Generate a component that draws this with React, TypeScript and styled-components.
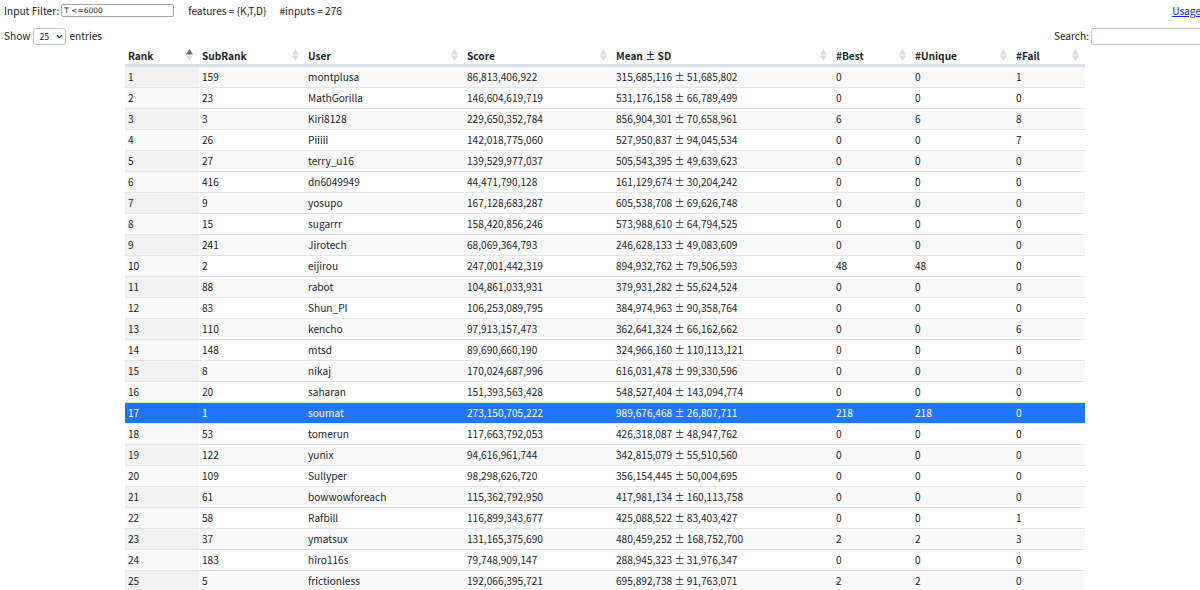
import React from "react";
import styled, { createGlobalStyle } from "styled-components";
import { ChevronDown } from "lucide-react";

const Global = createGlobalStyle`
  html, body { margin: 0; padding: 0; background: #fff; overflow: hidden; }
  body { font-family: "Noto Sans CJK JP", "Noto Sans", sans-serif; font-size: 10.15px; color: #212529; }
`;
const Page = styled.div`
  width: 1200px; height: 590px; overflow: hidden;
`;
const Inner = styled.div`
  width: 1201px; padding-left: 4px; box-sizing: border-box;
`;
const TopBar = styled.div`
  display: flex; align-items: center; height: 20px; white-space: nowrap;
`;
const FilterLabel = styled.label`
  margin-right: 2px;
`;
const FilterInput = styled.input`
  width: 108px; height: 11px; padding: 0 1px 0 2px; margin: 0; border: 1px solid #a5a5a5; border-radius: 2px;
  font-family: "DejaVu Sans", sans-serif; font-size: 7.5px; color: #212529; background: #fff; outline: none;
`;
const Feature = styled.span<{ $gap: number }>`
  margin-left: ${(p) => p.$gap}px;
`;
const UsageLink = styled.a`
  margin-left: auto; color: #0d25f0; text-decoration: underline;
`;
const ControlBar = styled.div`
  display: flex; align-items: center; justify-content: space-between; height: 18px; margin-top: 6px; margin-bottom: 2px;
`;
const LengthLabel = styled.div`
  display: flex; align-items: center; gap: 3px;
`;
const SelectWrap = styled.span`
  position: relative; display: inline-flex; margin-top: 2px;
`;
const LengthSelect = styled.select`
  appearance: none; width: 33px; height: 17px; padding: 0 0 0 5px; border: 1px solid #c4c4c4; border-radius: 3px; background: #fff;
  font-family: "Noto Sans CJK JP", sans-serif; font-size: 8.8px; color: #212529; margin: 0;
`;
const SelectChevron = styled(ChevronDown)`
  position: absolute; right: 2px; top: 4px; width: 9px; height: 9px; stroke-width: 3.5; color: #212529; pointer-events: none;
`;
const SearchLabel = styled.div`
  display: flex; align-items: center; gap: 2px;
`;
const SearchInput = styled.input`
  width: 111px; height: 15px; padding: 0; margin: 2px -3px 0 0; border: 1px solid #c4c4c4; border-radius: 3px; background: #fff; outline: none; box-sizing: content-box;
`;
const TableWrap = styled.div`
  margin: 1px 0 0 121px; width: 960px;
`;
const Table = styled.table`
  width: 960px; table-layout: fixed; border-collapse: collapse;
`;
const Th = styled.th`
  position: relative; height: 17px; padding: 1px 3px 0; text-align: left; font-weight: 700; font-size: 10.15px; line-height: 17px;
  border-bottom: 3px solid #dee2e6; color: #212529;
`;
const SortIcon = styled.svg`
  position: absolute; right: 6px; top: 3px; width: 7px; height: 12px;
`;
const Tr = styled.tr<{ $selected: boolean; $odd: boolean }>`
  height: 21px; background: ${(p) => (p.$selected ? "#2176ff" : p.$odd ? "#f9f9f9" : "#fff")};
  color: ${(p) => (p.$selected ? "#fff" : "#212529")};
`;
const Td = styled.td<{ $sorted?: boolean; $odd?: boolean; $selected?: boolean }>`
  padding: 0 3px; font-size: 10.15px; line-height: 20px; border-top: 1px solid #e3e6e9; white-space: nowrap; overflow: hidden;
  background: ${(p) => (p.$selected ? "#1f73f5" : p.$sorted ? (p.$odd ? "#f1f1f1" : "#fafafa") : "transparent")};
`;

const widths = [74, 106, 159, 149, 220, 79, 101, 72];
const headers = ["Rank", "SubRank", "User", "Score", "Mean ± SD", "#Best", "#Unique", "#Fail"];
const rows: (string | number)[][] = [
  [159, "montplusa", "86,813,406,922", "315,685,116 ± 51,685,802", 0, 0, 1],
  [23, "MathGorilla", "146,604,619,719", "531,176,158 ± 66,789,499", 0, 0, 0],
  [3, "Kiri8128", "229,650,352,784", "856,904,301 ± 70,658,961", 6, 6, 8],
  [26, "Piiiii", "142,018,775,060", "527,950,837 ± 94,045,534", 0, 0, 7],
  [27, "terry_u16", "139,529,977,037", "505,543,395 ± 49,639,623", 0, 0, 0],
  [416, "dn6049949", "44,471,790,128", "161,129,674 ± 30,204,242", 0, 0, 0],
  [9, "yosupo", "167,128,683,287", "605,538,708 ± 69,626,748", 0, 0, 0],
  [15, "sugarrr", "158,420,856,246", "573,988,610 ± 64,794,525", 0, 0, 0],
  [241, "Jirotech", "68,069,364,793", "246,628,133 ± 49,083,609", 0, 0, 0],
  [2, "eijirou", "247,001,442,319", "894,932,762 ± 79,506,593", 48, 48, 0],
  [88, "rabot", "104,861,033,931", "379,931,282 ± 55,624,524", 0, 0, 0],
  [83, "Shun_PI", "106,253,089,795", "384,974,963 ± 90,358,764", 0, 0, 0],
  [110, "kencho", "97,913,157,473", "362,641,324 ± 66,162,662", 0, 0, 6],
  [148, "mtsd", "89,690,660,190", "324,966,160 ± 110,113,121", 0, 0, 0],
  [8, "nikaj", "170,024,687,996", "616,031,478 ± 99,330,596", 0, 0, 0],
  [20, "saharan", "151,393,563,428", "548,527,404 ± 143,094,774", 0, 0, 0],
  [1, "soumat", "273,150,705,222", "989,676,468 ± 26,807,711", 218, 218, 0],
  [53, "tomerun", "117,663,792,053", "426,318,087 ± 48,947,762", 0, 0, 0],
  [122, "yunix", "94,616,961,744", "342,815,079 ± 55,510,560", 0, 0, 0],
  [109, "Sullyper", "98,298,626,720", "356,154,445 ± 50,004,695", 0, 0, 0],
  [61, "bowwowforeach", "115,362,792,950", "417,981,134 ± 160,113,758", 0, 0, 0],
  [58, "Rafbill", "116,899,343,677", "425,088,522 ± 83,403,427", 0, 0, 1],
  [37, "ymatsux", "131,165,375,690", "480,459,252 ± 168,752,700", 2, 2, 3],
  [183, "hiro116s", "79,748,909,147", "288,945,323 ± 31,976,347", 0, 0, 0],
  [5, "frictionless", "192,066,395,721", "695,892,738 ± 91,763,071", 2, 2, 0],
];

function Sort({ active }: { active?: boolean }) {
  return (
    <SortIcon viewBox="0 0 7 12" aria-hidden="true">
      <path d="M3.5 0 L7 5.4 L0 5.4 Z" fill={active ? "#6f6f6f" : "#dcdcdc"} />
      <path d="M3.5 12 L7 6.6 L0 6.6 Z" fill="#dcdcdc" />
    </SortIcon>
  );
}

export default function App() {
  return (
    <Page>
      <Global />
      <Inner>
        <TopBar>
          <FilterLabel>Input Filter:</FilterLabel>
          <FilterInput defaultValue="T <=6000" />
          <Feature $gap={14}>features = {"{K,T,D}"}</Feature>
          <Feature $gap={13}>#inputs = 276</Feature>
          <UsageLink href="#">Usage</UsageLink>
        </TopBar>
        <ControlBar>
          <LengthLabel>
            Show
            <SelectWrap>
              <LengthSelect defaultValue="25">
                <option>10</option>
                <option>25</option>
                <option>50</option>
              </LengthSelect>
              <SelectChevron />
            </SelectWrap>
            entries
          </LengthLabel>
          <SearchLabel>
            Search:
            <SearchInput />
          </SearchLabel>
        </ControlBar>
        <TableWrap>
          <Table>
            <colgroup>
              {widths.map((w, i) => (
                <col key={i} style={{ width: w }} />
              ))}
            </colgroup>
            <thead>
              <tr>
                {headers.map((h, i) => (
                  <Th key={h}>
                    {h}
                    <Sort active={i === 0} />
                  </Th>
                ))}
              </tr>
            </thead>
            <tbody>
              {rows.map((r, i) => {
                const odd = i % 2 === 0;
                const selected = i === 16;
                return (
                  <Tr key={i} $odd={odd} $selected={selected}>
                    <Td $sorted $odd={odd} $selected={selected}>{i + 1}</Td>
                    {r.map((c, j) => (
                      <Td key={j}>{c}</Td>
                    ))}
                  </Tr>
                );
              })}
            </tbody>
          </Table>
        </TableWrap>
      </Inner>
    </Page>
  );
}
